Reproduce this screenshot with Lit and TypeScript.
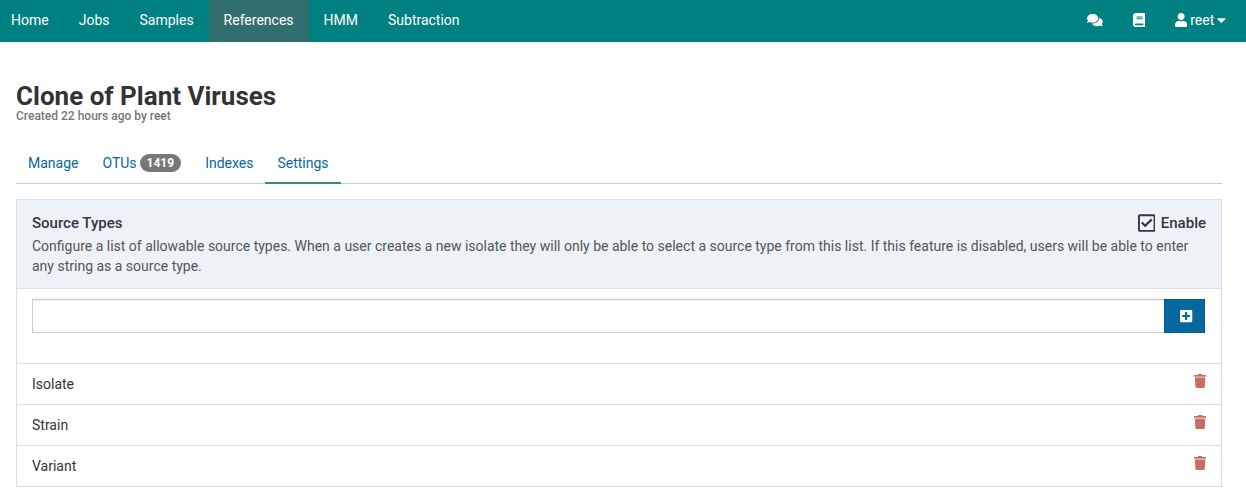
import { LitElement, html, css, svg } from "lit";
import { customElement, property, state } from "lit/decorators.js";
import { classMap } from "lit/directives/class-map.js";

const ICONS: Record<string, { width: number; path: string }> = {
  comments: {
    width: 576,
    path: "M416 192c0-88.4-93.1-160-208-160S0 103.6 0 192c0 34.3 14.1 65.9 38 92-13.4 30.2-35.5 54.2-35.8 54.5-2.2 2.3-2.8 5.7-1.5 8.7S4.8 352 8 352c36.6 0 66.9-12.3 88.7-25 32.2 15.7 70.3 25 111.3 25 114.9 0 208-71.6 208-160zm122 220c23.9-26 38-57.7 38-92 0-66.9-53.5-124.2-129.3-148.1.9 6.6 1.3 13.3 1.3 20.1 0 105.9-107.7 192-240 192-10.8 0-21.3-.8-31.7-1.9C207.8 439.6 281.8 480 368 480c41 0 79.1-9.2 111.3-25 21.8 12.7 52.1 25 88.7 25 3.2 0 6.1-1.9 7.3-4.8 1.3-2.9.7-6.3-1.5-8.7-.3-.3-22.4-24.2-35.8-54.5z",
  },
  book: {
    width: 448,
    path: "M448 360V24c0-13.3-10.7-24-24-24H96C43 0 0 43 0 96v320c0 53 43 96 96 96h328c13.3 0 24-10.7 24-24v-16c0-7.5-3.5-14.3-8.9-18.7-4.2-15.4-4.2-59.3 0-74.7 5.4-4.3 8.9-11.1 8.9-18.6zM128 134c0-3.3 2.7-6 6-6h212c3.3 0 6 2.7 6 6v20c0 3.3-2.7 6-6 6H134c-3.3 0-6-2.7-6-6v-20zm0 64c0-3.3 2.7-6 6-6h212c3.3 0 6 2.7 6 6v20c0 3.3-2.7 6-6 6H134c-3.3 0-6-2.7-6-6v-20zm253.4 250H96c-17.7 0-32-14.3-32-32 0-17.6 14.4-32 32-32h285.4c-1.9 17.1-1.9 46.9 0 64z",
  },
  user: {
    width: 448,
    path: "M224 256c70.7 0 128-57.3 128-128S294.7 0 224 0 96 57.3 96 128s57.3 128 128 128zm89.6 32h-16.7c-22.2 10.2-46.9 16-72.9 16s-50.6-5.8-72.9-16h-16.7C60.2 288 0 348.2 0 422.4V464c0 26.5 21.5 48 48 48h352c26.5 0 48-21.5 48-48v-41.6c0-74.2-60.2-134.4-134.4-134.4z",
  },
  caret: {
    width: 320,
    path: "M31.3 192h257.3c17.8 0 26.7 21.5 14.1 34.1L174.1 354.8c-7.8 7.8-20.5 7.8-28.3 0L17.2 226.1C4.6 213.5 13.5 192 31.3 192z",
  },
  plus: {
    width: 448,
    path: "M400 32H48C21.5 32 0 53.5 0 80v352c0 26.5 21.5 48 48 48h352c26.5 0 48-21.5 48-48V80c0-26.5-21.5-48-48-48zm-32 252c0 6.6-5.4 12-12 12h-92v92c0 6.6-5.4 12-12 12h-56c-6.6 0-12-5.4-12-12v-92H92c-6.6 0-12-5.4-12-12v-56c0-6.6 5.4-12 12-12h92v-92c0-6.6 5.4-12 12-12h56c6.6 0 12 5.4 12 12v92h92c6.6 0 12 5.4 12 12v56z",
  },
  box: {
    width: 448,
    path: "M400 32H48C21.5 32 0 53.5 0 80v352c0 26.5 21.5 48 48 48h352c26.5 0 48-21.5 48-48V80c0-26.5-21.5-48-48-48zm0 400H48V80h352v352z",
  },
  checkedBox: {
    width: 448,
    path: "M400 32H48C21.49 32 0 53.49 0 80v352c0 26.51 21.49 48 48 48h352c26.51 0 48-21.49 48-48V80c0-26.51-21.49-48-48-48zm0 400H48V80h352v352zm-35.864-241.724L191.547 361.48c-4.705 4.667-12.303 4.637-16.97-.068l-90.781-91.516c-4.667-4.705-4.637-12.303.069-16.971l22.719-22.536c4.705-4.667 12.303-4.637 16.97.069l59.792 60.277 141.352-140.216c4.705-4.667 12.303-4.637 16.97.068l22.536 22.718c4.667 4.706 4.637 12.304-.068 16.971z",
  },
  trash: {
    width: 448,
    path: "M432 32H312l-9.4-18.7A24 24 0 0 0 281.1 0H166.8a23.72 23.72 0 0 0-21.4 13.3L136 32H16A16 16 0 0 0 0 48v32a16 16 0 0 0 16 16h416a16 16 0 0 0 16-16V48a16 16 0 0 0-16-16zM53.2 467a48 48 0 0 0 47.9 45h245.8a48 48 0 0 0 47.9-45L416 128H32z",
  },
};

@customElement("app-icon")
export class AppIcon extends LitElement {
  @property() name = "";

  static styles = css`
    :host {
      display: inline-flex;
      height: 14px;
    }
    svg {
      height: 100%;
      width: auto;
      fill: currentColor;
    }
  `;

  render() {
    const icon = ICONS[this.name];
    return html`<svg viewBox="0 0 ${icon.width} 512" aria-hidden="true">
      ${svg`<path d=${icon.path}></path>`}
    </svg>`;
  }
}

@customElement("app-nav")
export class AppNav extends LitElement {
  static styles = css`
    .bar {
      display: flex;
      justify-content: space-between;
      height: 42px;
      background: #008080;
      line-height: 20px;
    }
    .group {
      display: flex;
    }
    a,
    button {
      display: flex;
      align-items: center;
      padding: 0 15px 2px;
      color: #fff;
      text-decoration: none;
      font: inherit;
      background: none;
      border: 0;
    }
    .links a:first-child {
      padding-left: 11px;
    }
    .links .active {
      background: #326e6e;
    }
    .account {
      gap: 3px;
      padding-right: 20px;
    }
  `;

  render() {
    const links = ["Home", "Jobs", "Samples", "References", "HMM", "Subtraction"];
    return html`<nav class="bar">
      <div class="group links">
        ${links.map(
          (label) =>
            html`<a href="#" class=${classMap({ active: label === "References" })}>${label}</a>`
        )}
      </div>
      <div class="group">
        <a href="#" aria-label="Chat"><app-icon name="comments"></app-icon></a>
        <a href="#" aria-label="Documentation"><app-icon name="book"></app-icon></a>
        <button class="account">
          <app-icon name="user"></app-icon>
          <span>reet</span>
          <app-icon name="caret"></app-icon>
        </button>
      </div>
    </nav>`;
  }
}

@customElement("source-types")
export class SourceTypes extends LitElement {
  @state() private enabled = true;
  @state() private types = ["Isolate", "Strain", "Variant"];
  @state() private draft = "";

  static styles = css`
    :host {
      display: block;
    }
    .panel {
      border: 1px solid #ddd;
    }
    .header {
      padding: 12px 15px;
      background: #edf2f7;
      border-bottom: 1px solid #ddd;
      color: #555;
    }
    .heading {
      display: flex;
      justify-content: space-between;
      align-items: center;
      margin-bottom: 2px;
      font-size: 15px;
      font-weight: 500;
      line-height: 22px;
      color: #2d3748;
    }
    h2,
    p,
    ul {
      margin: 0;
      padding: 0;
      font-size: inherit;
      font-weight: inherit;
    }
    .toggle {
      display: grid;
      grid-template-columns: 18px auto;
      column-gap: 5px;
      align-items: center;
    }
    .toggle input {
      grid-area: 1 / 1;
      appearance: none;
      width: 18px;
      height: 20px;
      margin: 0;
    }
    .toggle app-icon {
      grid-area: 1 / 1;
      height: 20px;
      pointer-events: none;
    }
    .entry {
      display: flex;
      padding: 10px 16px 30px 15px;
    }
    .entry input {
      flex: 1;
      min-width: 0;
      height: 34px;
      box-sizing: border-box;
      padding: 6px 12px;
      font: inherit;
      border: 1px solid #ccc;
      border-right: 0;
      border-radius: 0;
      box-shadow: inset 0 1px 1px rgba(0, 0, 0, 0.08);
      outline: none;
    }
    .add {
      display: flex;
      align-items: center;
      justify-content: center;
      width: 41px;
      padding: 0 0 0 4px;
      color: #fff;
      background: #07689d;
      border: 1px solid #065a88;
    }
    .add app-icon {
      height: 14px;
    }
    li {
      display: flex;
      justify-content: space-between;
      align-items: flex-start;
      padding: 10px 15px;
      border-top: 1px solid #ddd;
      color: #333;
      list-style: none;
    }
    .remove {
      display: flex;
      padding: 0;
      color: #c86c66;
      background: none;
      border: 0;
    }
  `;

  private add() {
    const value = this.draft.trim();
    if (value) {
      this.types = [...this.types, value];
      this.draft = "";
    }
  }

  render() {
    return html`<section class="panel">
      <div class="header">
        <div class="heading">
          <h2>Source Types</h2>
          <label class="toggle">
            <input
              type="checkbox"
              .checked=${this.enabled}
              @change=${() => (this.enabled = !this.enabled)}
            />
            <app-icon name=${this.enabled ? "checkedBox" : "box"}></app-icon>
            <span>Enable</span>
          </label>
        </div>
        <p>
          Configure a list of allowable source types. When a user creates a new isolate they will
          only be able to select a source type from this list. If this feature is disabled, users
          will be able to enter any string as a source type.
        </p>
      </div>
      <div class="entry">
        <input
          type="text"
          aria-label="Source type"
          .value=${this.draft}
          @input=${(e: Event) => (this.draft = (e.target as HTMLInputElement).value)}
        />
        <button class="add" aria-label="Add" @click=${this.add}>
          <app-icon name="plus"></app-icon>
        </button>
      </div>
      <ul>
        ${this.types.map(
          (type) => html`<li>
            <span>${type}</span>
            <button
              class="remove"
              aria-label="Remove ${type}"
              @click=${() => (this.types = this.types.filter((t) => t !== type))}
            >
              <app-icon name="trash"></app-icon>
            </button>
          </li>`
        )}
      </ul>
    </section>`;
  }
}

@customElement("app-root")
export class AppRoot extends LitElement {
  static styles = css`
    :host {
      display: block;
      font-family: Roboto, "Liberation Sans", sans-serif;
      font-size: 14px;
      line-height: 20px;
      color: #333;
      background: #fff;
    }
    main {
      padding: 40px 24px 7px 16px;
    }
    h1 {
      margin: 0;
      font-size: 26px;
      font-weight: 700;
      line-height: 28px;
    }
    .created {
      margin: 0;
      font-size: 12px;
      font-weight: 500;
      line-height: 12px;
      color: #777;
    }
    .tabs {
      display: flex;
      margin: 21px 0 15px;
      border-bottom: 1px solid #ccc;
    }
    .tabs a {
      display: flex;
      gap: 3px;
      padding: 10px 12px 9px;
      margin-bottom: -1px;
      color: #07689d;
      text-decoration: none;
      border-bottom: 2px solid transparent;
    }
    .tabs .active {
      border-color: #3c8786;
    }
    .badge {
      align-self: center;
      padding: 3px 7px;
      font-size: 12px;
      font-weight: 700;
      line-height: 12px;
      color: #fff;
      background: #777;
      border-radius: 10px;
    }
  `;

  render() {
    return html`<app-nav></app-nav>
      <main>
        <h1>Clone of Plant Viruses</h1>
        <p class="created">Created 22 hours ago by reet</p>
        <nav class="tabs">
          <a href="#">Manage</a>
          <a href="#">OTUs <span class="badge">1419</span></a>
          <a href="#">Indexes</a>
          <a href="#" class="active">Settings</a>
        </nav>
        <source-types></source-types>
      </main>`;
  }
}
